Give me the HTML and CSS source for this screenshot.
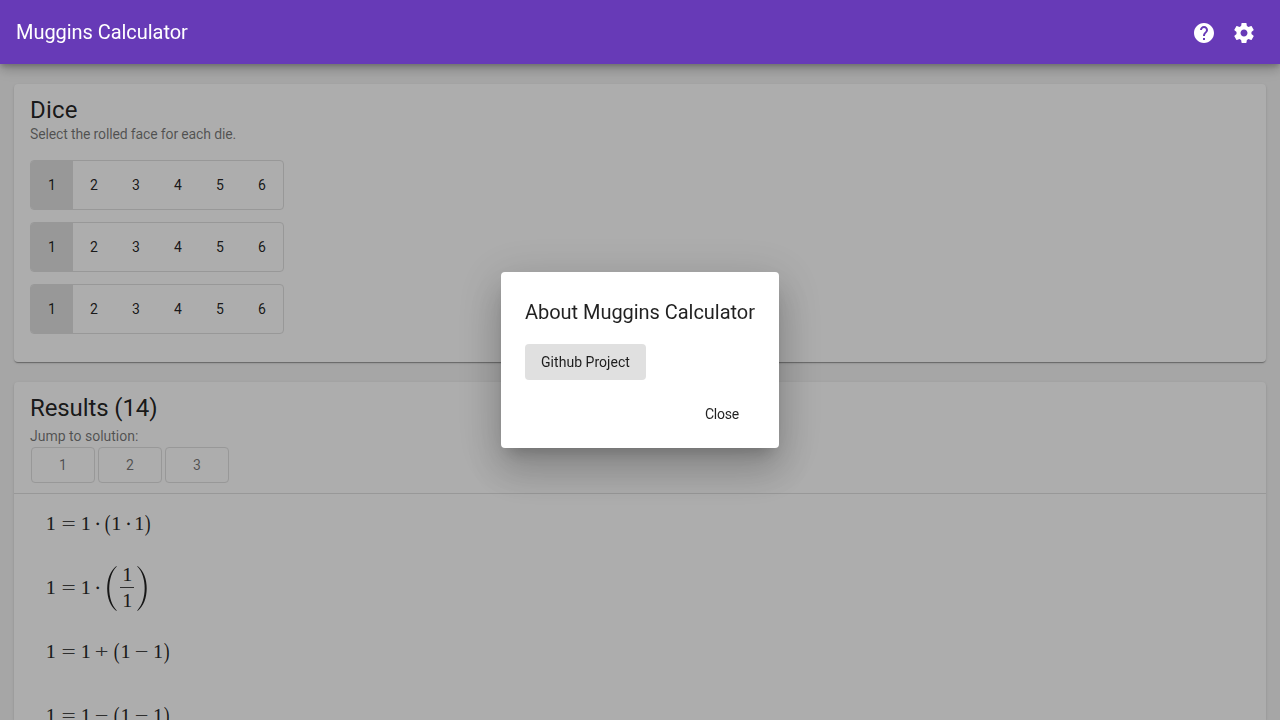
FILE: index.html
```html
<!DOCTYPE html>
<html lang="en">
<head>
<meta charset="utf-8">
<title>Muggins Calculator</title>
<link rel="stylesheet" href="styles.css">
</head>
<body>
<header class="toolbar">
  <span class="toolbar-title">Muggins Calculator</span>
  <button class="icon-button" aria-label="Help"><svg viewBox="0 0 24 24"><path d="M12 2C6.480 2 2 6.480 2 12s4.480 10 10 10 10-4.480 10-10S17.520 2 12 2zm1 17h-2v-2h2v2zm2.070-7.750l-.9.920C13.450 12.900 13 13.500 13 15h-2v-.5c0-1.100.450-2.100 1.170-2.830l1.240-1.260c.370-.360.590-.860.590-1.410 0-1.100-.9-2-2-2s-2 .9-2 2H8c0-2.210 1.790-4 4-4s4 1.790 4 4c0 .880-.360 1.680-.930 2.250z"/></svg></button>
  <button class="icon-button" aria-label="Settings"><svg viewBox="0 0 24 24"><path d="M19.430 12.980c.040-.320.070-.640.070-.980s-.030-.660-.070-.980l2.110-1.650c.190-.150.240-.420.120-.640l-2-3.460c-.120-.220-.390-.3-.610-.220l-2.490 1c-.520-.4-1.080-.730-1.690-.980l-.380-2.650C14.460 2.180 14.250 2 14 2h-4c-.250 0-.460.180-.490.420l-.380 2.650c-.610.250-1.170.590-1.690.980l-2.490-1c-.230-.090-.490 0-.610.220l-2 3.460c-.130.220-.070.490.120.640l2.110 1.650c-.040.320-.070.650-.070.980s.030.660.070.980l-2.110 1.650c-.190.150-.240.420-.120.640l2 3.460c.120.220.390.3.610.220l2.490-1c.520.4 1.080.730 1.690.980l.380 2.650c.030.240.240.420.490.420h4c.250 0 .460-.180.490-.420l.380-2.650c.610-.250 1.170-.590 1.690-.980l2.490 1c.230.090.490 0 .610-.220l2-3.460c.120-.220.070-.490-.120-.640l-2.110-1.650zM12 15.500c-1.930 0-3.500-1.570-3.500-3.500s1.570-3.500 3.500-3.500 3.500 1.570 3.500 3.500-1.570 3.500-3.500 3.500z"/></svg></button>
</header>
<main class="content">
  <section class="card dice-card">
    <h1 class="card-title dice-title">Dice</h1>
    <p class="card-subtitle dice-subtitle">Select the rolled face for each die.</p>
    <div class="dice">
      <div class="die"><span class="face selected">1</span><span class="face">2</span><span class="face">3</span><span class="face">4</span><span class="face">5</span><span class="face">6</span></div>
      <div class="die"><span class="face selected">1</span><span class="face">2</span><span class="face">3</span><span class="face">4</span><span class="face">5</span><span class="face">6</span></div>
      <div class="die"><span class="face selected">1</span><span class="face">2</span><span class="face">3</span><span class="face">4</span><span class="face">5</span><span class="face">6</span></div>
    </div>
  </section>
  <section class="card results-card">
    <div class="results-head">
      <h1 class="card-title">Results (14)</h1>
      <p class="card-subtitle jump-label">Jump to solution:</p>
      <div class="jumps"><button class="jump">1</button><button class="jump">2</button><button class="jump">3</button></div>
    </div>
    <div class="equations">
      <div class="equation"><span class="num">1</span><span class="rel">=</span><span class="num">1</span><span class="dot">·</span><span class="paren">(</span><span class="num">1</span><span class="dot">·</span><span class="num">1</span><span class="paren">)</span></div>
      <div class="equation"><span class="num">1</span><span class="rel">=</span><span class="num">1</span><span class="dot">·</span><svg class="big-paren" viewBox="0 0 14 47"><path d="M12.400 1C.2 10 .2 37 12.400 46L12.700 45.400C2.800 36 2.800 11 12.700 1.600Z"/></svg><span class="frac"><span>1</span><span class="denominator">1</span></span><svg class="big-paren" viewBox="0 0 14 47"><path d="M1.600 1C13.800 10 13.800 37 1.600 46L1.300 45.400C11.200 36 11.200 11 1.300 1.600Z"/></svg></div>
      <div class="equation"><span class="num">1</span><span class="rel">=</span><span class="num">1</span><span class="op">+</span><span class="paren">(</span><span class="num">1</span><span class="op">−</span><span class="num">1</span><span class="paren">)</span></div>
      <div class="equation"><span class="num">1</span><span class="rel">=</span><span class="num">1</span><span class="op">−</span><span class="paren">(</span><span class="num">1</span><span class="op">−</span><span class="num">1</span><span class="paren">)</span></div>
    </div>
  </section>
</main>
<div class="backdrop">
  <div class="dialog" role="dialog">
    <h2 class="dialog-title">About Muggins Calculator</h2>
    <button class="button project">Github Project</button>
    <div class="dialog-actions"><button class="button close">Close</button></div>
  </div>
</div>
</body>
</html>
```

FILE: styles.css
```css
* { box-sizing: border-box; }
body {
  margin: 0;
  height: 720px;
  overflow: hidden;
  background: #f5f5f5;
  color: rgba(0, 0, 0, .87);
  font-family: Roboto, sans-serif;
  font-size: 14px;
}
h1, h2, p { margin: 0; font-weight: 400; }
button { font: inherit; color: inherit; border: 0; background: none; padding: 0; }

.toolbar {
  position: relative;
  z-index: 3;
  display: flex;
  align-items: center;
  height: 64px;
  padding: 0 16px;
  background: #673ab7;
  color: #fff;
  box-shadow: 0 3px 5px -1px rgba(0,0,0,.2), 0 6px 10px rgba(0,0,0,.14), 0 1px 18px rgba(0,0,0,.12);
}
.toolbar-title { flex: 1; font-size: 20px; line-height: 32px; letter-spacing: -.050px; }
.icon-button { width: 40px; height: 40px; padding: 9px 8px 7px; }
.icon-button svg { display: block; width: 24px; height: 24px; fill: #fff; }

.content { display: flex; flex-direction: column; gap: 20px; height: 656px; overflow: hidden; padding: 20px 14px 0; }
.card {
  flex: none;
  border-radius: 4px;
  background: #fff;
  box-shadow: 0 2px 1px -1px rgba(0,0,0,.2), 0 1px 1px rgba(0,0,0,.14), 0 1px 3px rgba(0,0,0,.12);
}
.dice-card { height: 278px; padding: 10px 16px; }
.card-title { font-size: 24px; line-height: 32px; letter-spacing: -.110px; }
.dice-title { letter-spacing: .2px; }
.card-subtitle { color: rgba(0,0,0,.54); line-height: 16px; }
.dice-subtitle { letter-spacing: -.140px; }
.dice { display: flex; flex-direction: column; align-items: flex-start; gap: 12px; padding-top: 18px; }
.die { display: flex; border: 1px solid #e0e0e0; border-radius: 4px; overflow: hidden; }
.face { width: 42px; line-height: 48px; text-align: center; }
.selected { background: #e0e0e0; }

.results-card { flex: 1; min-height: 0; overflow: hidden; border-radius: 4px 4px 0 0; }
.results-head { height: 112px; padding: 10px 16px; border-bottom: 1px solid #e0e0e0; }
.jump-label { padding-top: 4px; line-height: 16px; }
.jumps { display: flex; gap: 3px; padding: 3px 1px; }
.jump { width: 64px; height: 36px; border: 1px solid #e0e0e0; border-radius: 4px; color: rgba(0,0,0,.54); }

.equations { margin-top: -2px; padding: 0 32px; font-family: "Liberation Serif", serif; font-size: 19.400px; }
.equation { display: flex; align-items: center; height: 64px; line-height: 24px; }
.equation > span { flex: none; text-align: center; }
.num, .frac > span { -webkit-text-stroke: .15px #212121; }
.num { width: 9.700px; }
.rel { width: 15px; margin: 0 5.100px; transform: scaleX(1.300); color: #444; }
.op { width: 15px; margin: 0 3.900px; transform: scaleX(1.250); color: #444; }
.dot { width: 5.400px; margin: 0 4px; -webkit-text-stroke: .3px #212121; }
.paren { width: 7.500px; transform: scale(.900, 1.150); }
.big-paren { flex: none; width: 14px; height: 47px; fill: #212121; }
.frac { display: flex; flex-direction: column; width: 14px; margin: 0 1.500px 0 2px; }
.dot + .big-paren { margin-left: .5px; }
.frac span { line-height: 24px; }
.frac .denominator { border-top: 1px solid #444; line-height: 26px; }

.backdrop {
  position: fixed;
  inset: 0;
  z-index: 2;
  display: flex;
  align-items: center;
  justify-content: center;
  background: rgba(0,0,0,.32);
}
.dialog {
  width: 278px;
  height: 176px;
  padding: 24px;
  border-radius: 4px;
  background: #fff;
  box-shadow: 0 11px 15px -7px rgba(0,0,0,.2), 0 24px 38px 3px rgba(0,0,0,.14), 0 9px 46px 8px rgba(0,0,0,.12);
}
.dialog-title { font-size: 20px; line-height: 32px; white-space: nowrap; margin-bottom: 16px; letter-spacing: -.040px; }
.button { height: 36px; padding: 0 16px; border-radius: 4px; line-height: 36px; }
.project { display: block; width: 121px; background: #e0e0e0; letter-spacing: .040px; }
.close { letter-spacing: -.220px; }
.dialog-actions { display: flex; justify-content: flex-end; padding-top: 16px; }
```
